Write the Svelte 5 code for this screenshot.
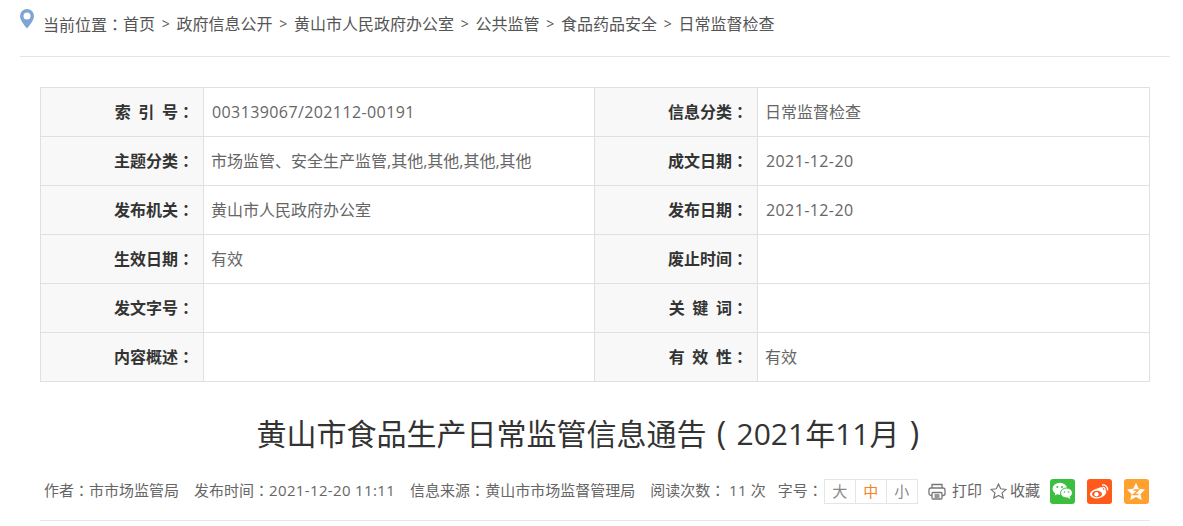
<script>
  const crumbs = ["首页", "政府信息公开", "黄山市人民政府办公室", "公共监管", "食品药品安全", "日常监督检查"];
  const rows = [
    ["索 引 号", "003139067/202112-00191", "信息分类", "日常监督检查"],
    ["主题分类", "市场监管、安全生产监管,其他,其他,其他,其他", "成文日期", "2021-12-20"],
    ["发布机关", "黄山市人民政府办公室", "发布日期", "2021-12-20"],
    ["生效日期", "有效", "废止时间", ""],
    ["发文字号", "", "关 键 词", ""],
    ["内容概述", "", "有 效 性", "有效"],
  ];
  const isNum = (s) => /^[\d\/-]+$/.test(s);
</script>

<div class="page">
  <div class="crumbs">
    <svg class="pin" width="14" height="20" viewBox="0 0 14 20">
      <path fill="#7fa6d3" fill-rule="evenodd" d="M7 0a7 7 0 0 1 7 7c0 4-4 9-7 12.500C4 16 0 11 0 7a7 7 0 0 1 7-7zm0 3.500a3.500 3.500 0 1 0 0 7 3.500 3.500 0 0 0 0-7z" />
    </svg>
    <span>当前位置<span class="c">：</span></span>
    {#each crumbs as c, i}
      {#if i > 0}<span class="sep">&gt;</span>{/if}
      <span>{c}</span>
    {/each}
  </div>

  <div class="body">
    <table>
      <colgroup>
        <col style="width:163px" />
        <col style="width:391px" />
        <col style="width:163px" />
        <col style="width:392px" />
      </colgroup>
      <tbody>
        {#each rows as r}
          <tr>
            <th>{r[0]}<span class="c">：</span></th>
            <td class:num={isNum(r[1])}>{r[1]}</td>
            <th>{r[2]}<span class="c">：</span></th>
            <td class:num={isNum(r[3])}>{r[3]}</td>
          </tr>
        {/each}
      </tbody>
    </table>

    <h1>黄山市食品生产日常监管信息通告<span class="paren">(</span>2021年11月<span class="paren">)</span></h1>

    <div class="meta">
      <span class="gap">作者<span class="c">：</span>市市场监管局</span>
      <span class="gap">发布时间<span class="c">：</span><span class="stamp">2021-12-20 11:11</span></span>
      <span class="gap">信息来源<span class="c">：</span>黄山市市场监督管理局</span>
      <span class="reads">阅读次数<span class="c">：</span> <span class="stamp">11</span> 次</span>
      <span>字号<span class="c">：</span></span>
      <div class="sizes">
        <span>大</span><span class="on">中</span><span>小</span>
      </div>
      <svg class="print" width="18" height="17" viewBox="0 0 18 17" fill="none" stroke="#777" stroke-width="1.300">
        <path d="M4 5V1.500h10V5" />
        <rect x="1" y="5" width="16" height="7.500" rx="2" />
        <rect x="4" y="9.500" width="10" height="6.500" rx="1" fill="#fff" />
        <path d="M6.500 12h5M6.500 14h5" />
      </svg>
      <span>打印</span>
      <svg class="star" width="17" height="16" viewBox="0 0 17 16" fill="none" stroke="#777" stroke-width="1.200">
        <path d="M8.500 1l2.200 4.800 5.300.6-3.900 3.500 1.100 5.100-4.700-2.600-4.700 2.600 1.100-5.100L1 6.400l5.300-.6z" />
      </svg>
      <span>收藏</span>
      <div class="share">
        <span class="ic wx">
          <svg width="21" height="18" viewBox="0 0 21 18" fill="#fff">
            <ellipse cx="7.800" cy="6.800" rx="7.300" ry="6" />
            <path d="M3.500 10.500l-.8 3 3.300-1.800z" />
            <ellipse cx="14.500" cy="11" rx="6" ry="5" stroke="#3bbf3f" stroke-width="1" />
            <path d="M17.500 14.500l.8 2.500-3-1.500z" />
            <circle cx="5.300" cy="5" r="1" fill="#3bbf3f" />
            <circle cx="10" cy="5" r="1" fill="#3bbf3f" />
            <circle cx="12.500" cy="10" r=".8" fill="#3bbf3f" />
            <circle cx="16.500" cy="10" r=".8" fill="#3bbf3f" />
          </svg>
        </span>
        <span class="ic wb">
          <svg width="21" height="18" viewBox="0 0 21 18">
            <path fill="#fff" d="M8.500 6.500c3-1.700 5-1.500 5.500-.5.300.7 0 1.300 0 1.800 2-.5 3.300.3 3.300 2 0 3-4.300 6.700-9.300 6.700C4 16.500 1 14.700 1 12c0-2 3-4.500 7.500-5.500z" />
            <ellipse cx="8" cy="12" rx="5" ry="3.300" fill="#ff5a1a" />
            <circle cx="7.500" cy="12.200" r="2.200" fill="#fff" />
            <path fill="none" stroke="#fff" stroke-width="1.300" d="M13 3c3-.6 6 1.500 5.500 5.500M13.500 5.500c1.500-.3 2.800.8 2.500 2.500" />
          </svg>
        </span>
        <span class="ic qz">
          <svg width="20" height="19" viewBox="0 0 20 19">
            <path fill="#fff" d="M10 1l2.800 5.800 6.200.8-4.500 4.300 1.200 6.100-5.700-3-5.700 3 1.200-6.100L1 7.600l6.200-.8z" />
            <path fill="none" stroke="#ffa02f" stroke-width="1.500" d="M7.500 8h5l-5 4.500h5" />
          </svg>
        </span>
      </div>
    </div>
    <div class="rule"></div>
  </div>
</div>

<style>
  :global(body) {
    margin: 0;
    background: #fff;
    overflow: hidden;
  }

  .page {
    width: 1150px;
    margin-left: 20px;
    font-family: "Open Sans", "Noto Sans CJK SC", sans-serif;
    color: #666;
    font-size: 16px;
  }

  /* centred full-width punctuation, as the original font draws it */
  .c {
    font-family: "Noto Sans CJK TC", sans-serif;
  }

  .num {
    letter-spacing: 0.4px;
  }

  .stamp {
    letter-spacing: 0.35px;
  }

  .crumbs {
    display: flex;
    align-items: flex-start;
    height: 56px;
    border-bottom: 1px solid #e5e5e5;
    color: #555;
    line-height: 20px;
  }

  .crumbs > span {
    margin-top: 14px;
    white-space: nowrap;
  }

  .pin {
    margin-top: 9px;
    margin-right: 9px;
  }

  .crumbs > .sep {
    width: 21.500px;
    text-align: center;
    font-size: 14px;
  }

  .body {
    padding: 30px 20px 0;
  }

  table {
    width: 1109px;
    border-collapse: collapse;
    table-layout: fixed;
  }

  th,
  td {
    padding: 0 0 2px;
    box-sizing: border-box;
    height: 49px;
    border: 1px solid #e0e0e0;
    font-size: 16px;
  }

  th {
    background: #f8f8f8;
    color: #333;
    font-weight: 700;
    text-align: right;
    padding-right: 9px;
    word-spacing: 3.500px;
    white-space: nowrap;
  }

  td {
    padding-left: 7px;
    color: #666;
  }

  td.num {
    padding-left: 8px;
    padding-bottom: 0;
  }

  h1 {
    margin: 30px 0 0;
    padding-right: 4px;
    height: 46px;
    line-height: 44px;
    font-size: 30px;
    font-weight: 400;
    color: #333;
    text-align: center;
  }

  .paren {
    display: inline-block;
    width: 30px;
    text-align: center;
    font-size: 32px;
    line-height: 40px;
    font-weight: 400;
  }

  .meta {
    display: flex;
    align-items: center;
    height: 30px;
    margin-top: 18px;
    padding-left: 4px;
    font-size: 15px;
    line-height: 26px;
    color: #666;
    white-space: nowrap;
  }

  .meta > span {
    margin-bottom: 3px;
  }

  .gap {
    margin-right: 15px;
  }

  .reads {
    margin-right: 12px;
  }

  .sizes {
    display: flex;
    box-sizing: border-box;
    width: 94px;
    height: 25px;
    margin-left: 1px;
    border: 1px solid #e5e5e5;
  }

  .sizes span {
    flex: 1;
    text-align: center;
    line-height: 23px;
    color: #888;
    border-left: 1px solid #e5e5e5;
  }

  .sizes span:first-child {
    border-left: 0;
  }

  .sizes .on {
    color: #f58220;
  }

  .print {
    margin-left: 10px;
    margin-right: 6px;
  }

  .star {
    margin-left: 8px;
    margin-right: 3px;
  }

  .share {
    display: flex;
    gap: 12px;
    margin-left: 10px;
  }

  .ic {
    display: flex;
    align-items: center;
    justify-content: center;
    width: 25px;
    height: 25px;
    border-radius: 3px;
  }

  .wx { background: #3bbf3f; }
  .wb { background: #ff5a1a; }
  .qz { background: #ffa02f; }

  .rule {
    height: 1px;
    margin-top: 14px;
    background: #e5e5e5;
  }
</style>
